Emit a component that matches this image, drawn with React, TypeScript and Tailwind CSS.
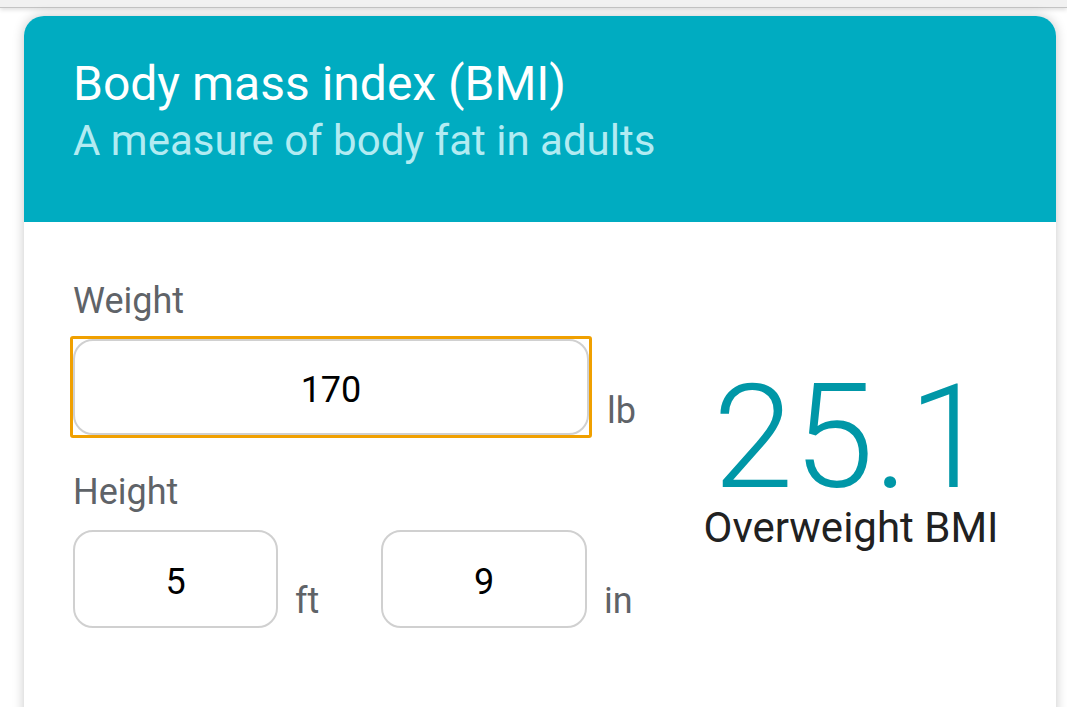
import React from 'react';

export default function App() {
  return (
    <div className="min-h-[707px] bg-white overflow-hidden" style={{ fontFamily: 'Roboto, "Liberation Sans", sans-serif' }}>
      <div className="h-[8px] bg-[#f1f1f1] border-b border-[#c4c4c4] shadow-[0_2px_4px_rgba(0,0,0,0.12)]" />
      <div className="mx-[24px] mt-[8px] w-[1032px] h-[720px] rounded-t-[20px] bg-white shadow-[0_0_12px_rgba(0,0,0,0.22)] overflow-hidden">
        {/* Header */}
        <div className="h-[206px] bg-[#00acc1] pl-[49px] pt-[40px]">
          <h1 className="text-white text-[48px] leading-[56px]">Body mass index (BMI)</h1>
          <p className="text-[#b2ebf2] text-[42px] leading-[57px]">A measure of body fat in adults</p>
        </div>

        {/* Body */}
        <div className="flex pl-[49px] pt-[58px]">
          <div className="flex flex-col w-[590px]">
            <label className="text-[36px] leading-[42px] text-[#5f6368]">Weight</label>
            <div className="flex items-end mt-[17px]">
              <div className="w-[522px] h-[102px] border-[3px] border-[#f0a000] rounded-[3px] -ml-[3px] -mt-[3px]">
                <div className="h-full w-full rounded-[20px] border-[2px] border-[#d0d0d0] flex items-center justify-center pt-[6px] text-[36px] text-black">
                  170
                </div>
              </div>
              <span className="ml-[15px] mb-[6px] text-[36px] leading-[42px] text-[#5f6368]">lb</span>
            </div>
            <label className="mt-[33px] text-[36px] leading-[42px] text-[#5f6368]">Height</label>
            <div className="flex items-end mt-[17px]">
              <div className="w-[205px] h-[98px] rounded-[20px] border-[2px] border-[#d0d0d0] flex items-center justify-center pt-[6px] text-[36px] text-black">
                5
              </div>
              <span className="ml-[17px] mb-[6px] w-[86px] text-[36px] leading-[42px] text-[#5f6368]">ft</span>
              <div className="w-[206px] h-[98px] rounded-[20px] border-[2px] border-[#d0d0d0] flex items-center justify-center pt-[6px] text-[36px] text-black">
                9
              </div>
              <span className="ml-[17px] mb-[6px] text-[36px] leading-[42px] text-[#5f6368]">in</span>
            </div>
          </div>
          <div className="flex-1 flex flex-col items-center pt-[92px] pr-[17px]">
            <div className="text-[145px] leading-[130px] font-light text-[#0097a7]">25.1</div>
            <div className="mt-[2px] text-[42px] leading-[48px] text-[#212121]">Overweight BMI</div>
          </div>
        </div>
      </div>
    </div>
  );
}
